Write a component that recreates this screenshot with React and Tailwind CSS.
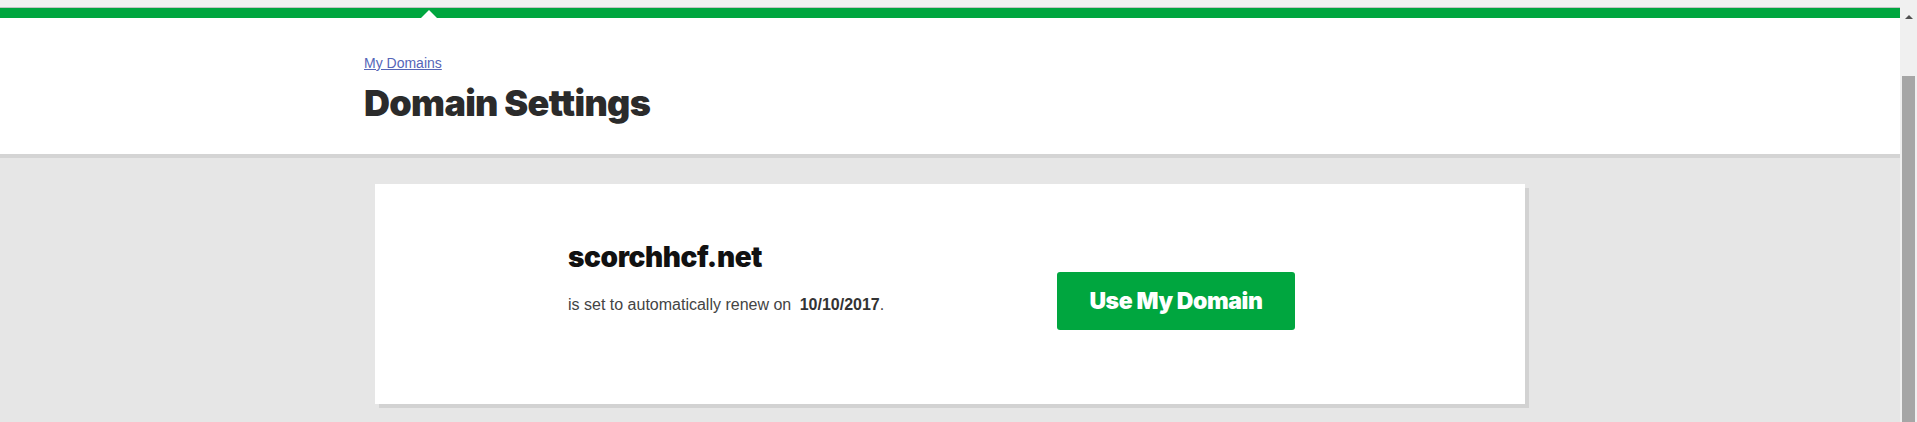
import React from 'react';

/**
 * Domain Settings page
 * Header with breadcrumb + title, and a card for the selected domain
 */
export default function App() {
  const domain = 'scorchhcf.net';
  const renewDate = '10/10/2017';

  return (
    <div className="flex h-[422px] overflow-hidden font-['Liberation_Sans',Arial,sans-serif]">
      {/* Page */}
      <div className="flex-1 bg-[#e6e6e6]">
        {/* Top nav remnant + green bar */}
        <div className="h-[7px] bg-[#f1f1f1]" />
        <div className="h-px bg-[#c4c4c4]" />
        <div className="relative h-[10px] bg-[#00a63f]">
          <span className="absolute bottom-0 left-[421px] h-0 w-0 border-x-[8px] border-b-[8px] border-x-transparent border-b-white" />
        </div>

        {/* Header */}
        <header className="h-[140px] border-b-4 border-[#d4d4d4] bg-white">
          <div className="mx-auto w-[1172px] pt-[33px]">
            <a href="#" className="text-[14px] leading-4 text-[#5565b8] underline">
              My Domains
            </a>
            <h1 className="mt-[10px] font-['Inter',sans-serif] text-[36px] leading-9 font-black tracking-[-0.7px] text-[#2b2b2b]">
              Domain Settings
            </h1>
          </div>
        </header>

        {/* Main */}
        <main className="pt-[26px]">
          <div className="mx-auto flex h-[220px] w-[1150px] items-start bg-white pt-[57px] pl-[193px] shadow-[4px_4px_0_#d2d2d2]">
            <div className="w-[489px]">
              <h2 className="font-['Inter',sans-serif] text-[28px] leading-8 font-black tracking-[-0.4px] text-[#111]">
                {domain}
              </h2>
              <p className="mt-[22px] text-[16px] leading-5 text-[#444]">
                is set to automatically renew on{' '}
                <strong className="ml-1 font-bold text-[#333]">{renewDate}</strong>.
              </p>
            </div>
            <button className="mt-[31px] flex h-[58px] w-[238px] items-center justify-center rounded-[3px] bg-[#00a63f] font-['Inter',sans-serif] text-[23px] font-black tracking-[-0.4px] text-white">
              Use My Domain
            </button>
          </div>
        </main>
      </div>

      {/* Scrollbar */}
      <div className="flex w-[17px] flex-col bg-[#f0f0f0]">
        <div className="flex h-[76px] justify-center pt-[15px]">
          <span className="h-0 w-0 border-x-[4px] border-b-[4px] border-x-transparent border-b-[#505050]" />
        </div>
        <div className="ml-[2px] w-[13px] flex-1 bg-[#a6a6a6]" />
      </div>
    </div>
  );
}
